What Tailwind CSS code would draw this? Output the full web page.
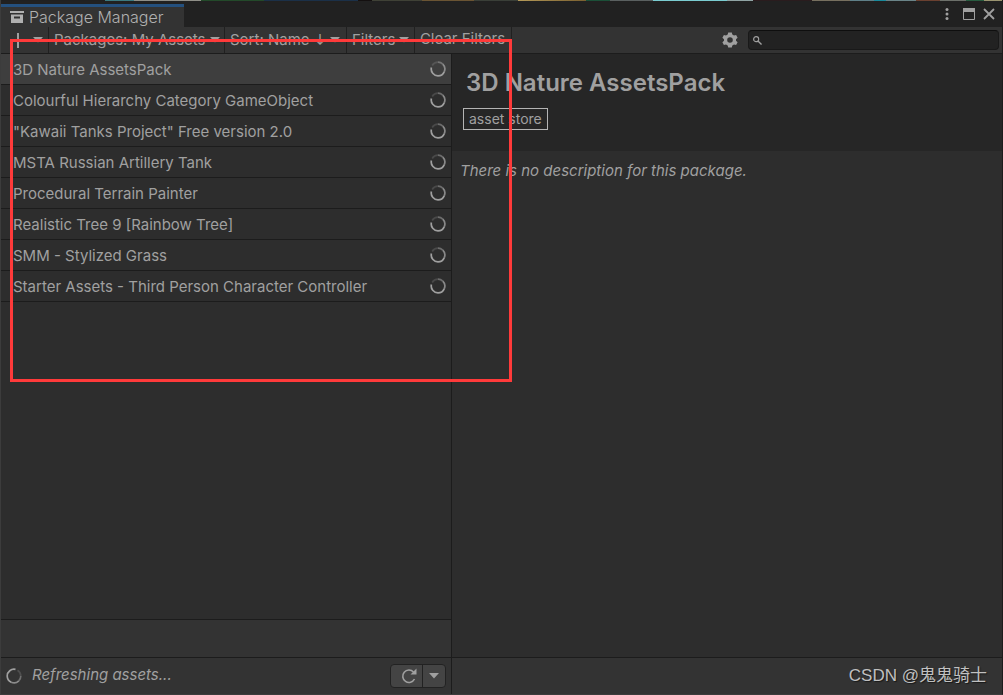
<!DOCTYPE html>
<html lang="en">
<head>
<meta charset="utf-8">
<title>Package Manager</title>
<script src="https://cdn.jsdelivr.net/npm/@tailwindcss/browser@4"></script>
</head>
<body class="h-screen overflow-hidden bg-[#2d2d2d] text-[#a0a0a0] font-['Inter','Noto_Sans_CJK_SC',sans-serif] text-[15px] leading-5">
<svg class="hidden" aria-hidden="true">
  <symbol id="spinner" viewBox="0 0 16 16">
    <g fill="none" stroke="currentColor" stroke-width="1.7">
      <path d="M1.400 6.500A6.800 6.800 0 0 0 8 14.800A6.800 6.800 0 0 0 14.200 10.800"/>
      <path d="M14.200 10.800A6.800 6.800 0 0 0 12.800 3.200" opacity=".8"/>
      <path d="M12.800 3.200A6.800 6.800 0 0 0 8 1.200" opacity=".55"/>
      <path d="M8 1.200A6.800 6.800 0 0 0 2.200 4.500" opacity=".25"/>
    </g>
  </symbol>
  <symbol id="caret" viewBox="0 0 10 6"><path d="M0 0H10L5 5.5Z" fill="currentColor"/></symbol>
</svg>
<div class="relative flex h-full flex-col border-x border-b border-[#3c3c3c] border-r-[#1c1c1c]">
  <div class="flex h-px shrink-0 bg-[#202020]">
    <span class="w-[104px] bg-[#202020]"></span>
    <span class="w-[29px] bg-[#3c7a80]"></span>
    <span class="w-[67px] bg-[#8f8f88]"></span>
    <span class="w-16 bg-[#234a2a]"></span>
    <span class="w-[94px] bg-[#1b3048]"></span>
    <span class="w-[14px] bg-[#141010]"></span>
    <span class="w-[50px] bg-[#3f4136]"></span>
    <span class="w-[52px] bg-[#6a5433]"></span>
    <span class="w-11 bg-[#3a3f38]"></span>
    <span class="w-[68px] bg-linear-to-r from-[#b59a58] to-[#7a6030]"></span>
    <span class="w-[24px] bg-[#1b5038]"></span>
    <span class="w-[43px] bg-[#5a6060]"></span>
    <span class="w-[74px] bg-[#7accd0]"></span>
    <span class="w-[26px] bg-[#90a4a4]"></span>
    <span class="w-[60px] bg-[#2a1c1e]"></span>
    <span class="w-[38px] bg-[#77705f]"></span>
    <span class="w-[24px] bg-[#5f8088]"></span>
    <span class="w-[12px] bg-[#1a8a9c]"></span>
    <span class="w-[30px] bg-[#6a8488]"></span>
    <span class="w-[24px] bg-[#6a4030]"></span>
    <span class="w-[26px] bg-[#6c706a]"></span>
    <span class="bg-[#285c40] w-[18px]"></span>
    <span class="w-[18px] bg-[#9a9470]"></span>
  </div>
  <header class="flex h-[26px] shrink-0 items-end bg-[#212121]">
    <h1 class="flex h-[23px] w-[183px] items-center gap-[5px] border-t-3 border-[#24507e] bg-[#333] pl-[9px] text-base font-light whitespace-nowrap text-[#b0b0b0]">
      <svg class="h-3 w-[14px] shrink-0" viewBox="0 0 14 12" fill="currentColor"><path d="M0 0H14V2H0ZM1 3.5H13V12H1ZM4 5.5V7.500H10V5.500Z" fill-rule="evenodd"/></svg>
      Package Manager
    </h1>
    <div class="ml-auto flex h-full items-center gap-2 pr-[7px]">
      <button aria-label="Menu" class="mr-[6px]"><svg class="h-3 w-1" viewBox="0 0 4 12" fill="currentColor"><circle cx="2" cy="1.500" r="1.500"/><circle cx="2" cy="6" r="1.500"/><circle cx="2" cy="10.500" r="1.500"/></svg></button>
      <button aria-label="Maximize"><svg class="h-3 w-3" viewBox="0 0 12 12"><path d="M.5 .5H11.500V11.500H.5Z" fill="none" stroke="currentColor"/><path d="M0 0H12V4H0Z" fill="currentColor"/></svg></button>
      <button aria-label="Close"><svg class="h-3 w-3" viewBox="0 0 12 12"><path d="M1 1L11 11M11 1L1 11" stroke="currentColor" stroke-width="1.800"/></svg></button>
    </div>
  </header>
  <nav class="flex h-[27px] shrink-0 border-b border-[#1c1c1c] bg-[#333]">
    <button aria-label="Add" class="flex w-12 items-center gap-2 border-r border-[#202020] pl-[9px]">
      <svg class="h-[15px] w-[15px]" viewBox="0 0 15 15"><path d="M8 0V15M0 7.500H15" stroke="currentColor" stroke-width="2"/></svg>
      <svg class="h-[6px] w-[10px]"><use href="#caret"/></svg>
    </button>
    <button class="flex w-44 items-center gap-1 border-r border-[#202020] pl-[5px] whitespace-nowrap">Packages: My Assets <svg class="h-[6px] w-[10px]"><use href="#caret"/></svg></button>
    <button class="flex w-[122px] items-center gap-1 border-r border-[#202020] pl-[5px] whitespace-nowrap">Sort: Name ↓ <svg class="h-[6px] w-[10px]"><use href="#caret"/></svg></button>
    <button class="flex w-[68px] items-center gap-1 border-r border-[#202020] pl-[5px] whitespace-nowrap">Filters <svg class="h-[6px] w-[10px]"><use href="#caret"/></svg></button>
    <button class="w-[97px] border-r border-[#202020] pr-px pb-[3px] whitespace-nowrap">Clear Filters</button>
    <div class="ml-auto flex items-center gap-[10px] pr-[3px]">
      <button aria-label="Settings"><svg class="h-4 w-4" viewBox="0 0 16 16" fill="currentColor"><path fill-rule="evenodd" d="M6.200 .5H9.800L10.300 2.600L12 3.500L14.100 2.900L15.600 5.700L14 7.200V8.800L15.600 10.300L14.100 13.100L12 12.500L10.300 13.400L9.800 15.500H6.200L5.700 13.400L4 12.500L1.900 13.100L.4 10.300L2 8.800V7.200L.4 5.700L1.900 2.900L4 3.500L5.700 2.600ZM8 5.200A2.800 2.800 0 1 0 8 10.800A2.800 2.800 0 1 0 8 5.200Z"/></svg></button>
      <label class="flex h-5 w-[25vw] items-center rounded-[4px] border border-[#191919] border-t-[#0e0e0e] bg-[#222] pl-1">
        <svg class="h-[9px] w-[9px] shrink-0" viewBox="0 0 10 10" fill="none" stroke="currentColor"><circle cx="3.500" cy="3.500" r="2.800" stroke-width="1.300"/><path d="M5.500 5.500L9.500 9.500" stroke-width="1.500"/></svg>
        <input type="text" aria-label="Search packages" class="ml-1 w-full min-w-0 bg-transparent outline-none">
      </label>
    </div>
  </nav>
  <main class="flex min-h-0 flex-1">
    <section class="flex w-[451px] shrink-0 flex-col border-r border-[#1c1c1c]">
      <ul class="flex-1">
        <li class="flex h-[31px] items-center justify-between border-b border-[#1c1c1c] bg-[#3e3e3e] pr-[5px] pl-3"><span class="pt-px">3D Nature AssetsPack</span><svg class="h-4 w-4"><use href="#spinner"/></svg></li>
        <li class="flex h-[31px] items-center justify-between border-b border-[#1c1c1c] pr-[5px] pl-3"><span class="pt-px">Colourful Hierarchy Category GameObject</span><svg class="h-4 w-4"><use href="#spinner"/></svg></li>
        <li class="flex h-[31px] items-center justify-between border-b border-[#1c1c1c] pr-[5px] pl-3"><span class="pt-px">"Kawaii Tanks Project" Free version 2.0</span><svg class="h-4 w-4"><use href="#spinner"/></svg></li>
        <li class="flex h-[31px] items-center justify-between border-b border-[#1c1c1c] pr-[5px] pl-3"><span class="pt-px">MSTA Russian Artillery Tank</span><svg class="h-4 w-4"><use href="#spinner"/></svg></li>
        <li class="flex h-[31px] items-center justify-between border-b border-[#1c1c1c] pr-[5px] pl-3"><span class="pt-px">Procedural Terrain Painter</span><svg class="h-4 w-4"><use href="#spinner"/></svg></li>
        <li class="flex h-[31px] items-center justify-between border-b border-[#1c1c1c] pr-[5px] pl-3"><span class="pt-px">Realistic Tree 9 [Rainbow Tree]</span><svg class="h-4 w-4"><use href="#spinner"/></svg></li>
        <li class="flex h-[31px] items-center justify-between border-b border-[#1c1c1c] pr-[5px] pl-3"><span class="pt-px">SMM - Stylized Grass</span><svg class="h-4 w-4"><use href="#spinner"/></svg></li>
        <li class="flex h-[31px] items-center justify-between border-b border-[#1c1c1c] pr-[5px] pl-3"><span class="pt-px">Starter Assets - Third Person Character Controller</span><svg class="h-4 w-4"><use href="#spinner"/></svg></li>
      </ul>
      <div class="h-[38px] border-t border-[#1c1c1c] bg-[#333]"></div>
      <footer class="flex h-[37px] items-center border-t border-[#1c1c1c] bg-[#333] pr-[5px] pl-[5px]">
        <svg class="h-4 w-4 rotate-90"><use href="#spinner"/></svg>
        <em class="ml-[10px] pb-[3px]">Refreshing assets...</em>
        <div class="ml-auto flex h-6 rounded-[4px] border border-[#222] bg-[#444]">
          <button aria-label="Refresh" class="flex w-8 items-center justify-center border-r border-[#222] pl-1"><svg class="h-4 w-4" viewBox="0 0 16 16"><path d="M12.500 4A6.200 6.200 0 1 0 13.500 11" fill="none" stroke="currentColor" stroke-width="1.600"/><path d="M15.500 .5V6.500H9.500Z" fill="currentColor"/></svg></button>
          <button aria-label="Refresh options" class="flex w-[22px] items-center justify-center"><svg class="h-[6px] w-[10px]"><use href="#caret"/></svg></button>
        </div>
      </footer>
    </section>
    <section class="flex min-w-0 flex-1 flex-col">
      <div class="h-[97px] bg-[#262626] pt-[13px] pl-[11px]">
        <h2 class="pl-[3px] text-2xl font-semibold">3D Nature AssetsPack</h2>
        <a href="#" class="mt-[9px] inline-block border border-[#b4b4b4] px-[5px] text-sm">asset store</a>
      </div>
      <p class="flex-1 pt-[10px] pl-2 italic">There is no description for this package.</p>
      <footer class="flex h-[37px] items-center justify-end border-t border-[#1c1c1c] bg-[#333] pr-[15px] font-['Liberation_Sans','Noto_Sans_CJK_SC',sans-serif] text-[17px] text-[#c0c0c0] text-shadow-[1px_1px_1px_#181818]">CSDN @鬼鬼骑士</footer>
    </section>
  </main>
  <div class="pointer-events-none absolute top-[39px] left-[9px] h-[343px] w-[502px] border-3 border-[#ff3a3a]"></div>
</div>
</body>
</html>
